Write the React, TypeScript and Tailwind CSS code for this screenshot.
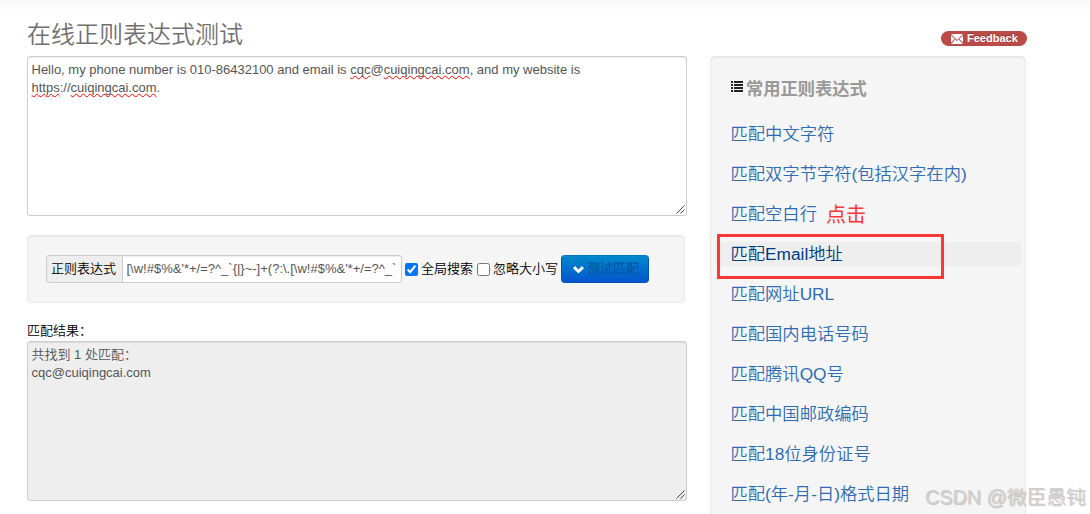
import React, { useState } from 'react';
import clsx from 'clsx';

const patterns = [
  '匹配中文字符',
  '匹配双字节字符(包括汉字在内)',
  '匹配空白行',
  '匹配Email地址',
  '匹配网址URL',
  '匹配国内电话号码',
  '匹配腾讯QQ号',
  '匹配中国邮政编码',
  '匹配18位身份证号',
  '匹配(年-月-日)格式日期',
];

function Misspelled({ children }: { children: React.ReactNode }) {
  return (
    <span className="underline decoration-[#f00] decoration-wavy decoration-[1.3px] underline-offset-1 [text-decoration-skip-ink:none]">
      {children}
    </span>
  );
}

function ResizeGrip() {
  return (
    <svg
      className="absolute right-px bottom-px h-[9px] w-[9px]"
      viewBox="0 0 9 9"
      fill="none"
      stroke="#444"
      strokeWidth="1"
    >
      <path d="M0.5 8.5l8-8M4.5 8.5l4-4" />
    </svg>
  );
}

interface TextPanelProps {
  children: React.ReactNode;
  className?: string;
}

function TextPanel({ children, className }: TextPanelProps) {
  return (
    <div
      className={clsx(
        'relative h-40 w-[660px] rounded-[3px] border border-[#ccc] py-1 pl-[3.5px] text-[#555] shadow-[inset_0_1px_1px_rgba(0,0,0,0.075)]',
        className
      )}
    >
      {children}
      <ResizeGrip />
    </div>
  );
}

interface CheckOptionProps {
  label: string;
  checked: boolean;
  onChange: () => void;
}

function CheckOption({ label, checked, onChange }: CheckOptionProps) {
  return (
    <label className="flex h-7 items-center whitespace-nowrap">
      <input
        type="checkbox"
        checked={checked}
        onChange={onChange}
        className="mt-px mr-[3px] h-[13px] w-[13px]"
      />
      {label}
    </label>
  );
}

export default function App() {
  const [global, setGlobal] = useState(true);
  const [ignoreCase, setIgnoreCase] = useState(false);
  const [selected, setSelected] = useState(3);

  return (
    <div className="relative h-[514px] w-[1090px] overflow-hidden bg-white font-['Liberation_Sans','Noto_Sans_CJK_SC',sans-serif] text-[13px] leading-[18px] font-[350] text-black">
      <div className="h-3 bg-linear-to-b from-[#f9f9f9] to-white" />

      <div className="flex pl-[27px]">
        <main className="w-[683px] shrink-0">
          <h1 className="h-11 text-[24px] leading-[45px] font-[350] text-[#707070]">在线正则表达式测试</h1>

          <TextPanel className="bg-white">
            Hello, my phone number is 010-86432100 and email is <Misspelled>cqc</Misspelled>@
            <Misspelled>cuiqingcai.com</Misspelled>, and my website is
            <br />
            <Misspelled>https</Misspelled>://<Misspelled>cuiqingcai.com</Misspelled>.
          </TextPanel>

          {/* Expression */}
          <div className="mt-[19px] flex h-[68px] w-[658px] items-start rounded-[4px] border border-[#e8e8e8] bg-[#f5f5f5] pt-[19px] pl-[18px] shadow-[inset_0_1px_1px_rgba(0,0,0,0.05)]">
            <span className="h-7 w-[77px] shrink-0 rounded-l-[3px] border border-[#ccc] bg-[#eee] pl-1 leading-[26px] whitespace-nowrap">
              正则表达式
            </span>
            <div className="-ml-px h-7 w-[280px] shrink-0 rounded-r-[3px] border border-[#ccc] bg-white pr-1 pl-[3.5px] leading-[26px] text-[#555] shadow-[inset_0_1px_1px_rgba(0,0,0,0.075)]">
              <div className="overflow-hidden whitespace-nowrap">
                {"[\\w!#$%&'*+/=?^_`{|}~-]+(?:\\.[\\w!#$%&'*+/=?^_`"}
              </div>
            </div>
            <div className="ml-[3px] flex gap-1">
              <CheckOption label="全局搜索" checked={global} onChange={() => setGlobal(!global)} />
              <CheckOption
                label="忽略大小写"
                checked={ignoreCase}
                onChange={() => setIgnoreCase(!ignoreCase)}
              />
            </div>
            <button
              type="button"
              className="ml-[3px] flex h-7 w-[88px] shrink-0 items-center rounded-[4px] border border-[#0055b4] border-t-[#0077c0] bg-linear-to-b from-[#0088cc] to-[#0055cc] pl-[11px] whitespace-nowrap text-[#0756a2] [text-shadow:0_-1px_0_rgba(0,0,0,0.15)]"
            >
              <svg className="mr-[3px] h-[11px] w-[11px]" viewBox="0 0 11 11" fill="none">
                <path d="M1 3.2l4.5 4.3L10 3.2" stroke="#fff" strokeWidth="3" />
              </svg>
              测试匹配
            </button>
          </div>

          {/* Result */}
          <p className="mt-[19px] h-[19px]">匹配结果：</p>
          <TextPanel className="bg-[#eee]">
            共找到 1 处匹配：
            <br />
            cqc@cuiqingcai.com
          </TextPanel>
        </main>

        <aside className="w-[317px] shrink-0 pt-[19px]">
          <div className="flex justify-end">
            <a className="flex h-[15px] w-[86px] items-center rounded-full bg-[#b94a48] pl-[10px] text-[11px] leading-[15px] font-bold text-white [text-shadow:0_-1px_0_rgba(0,0,0,0.25)]">
              <svg className="mt-px mr-1 h-[10px] w-3" viewBox="0 0 12 10">
                <path
                  fill="#fff"
                  d="M0 0h12L6 6zM0 1.3L3.8 5 0 8.5zM12 1.3L8.2 5 12 8.5zM0 10l4.4-4.4L6 7.1l1.6-1.5L12 10z"
                />
              </svg>
              Feedback
            </a>
          </div>

          <div className="mt-2.5 h-[480px] w-[316px] rounded-[4px] border border-[#e8e8e8] bg-[#f5f5f5] pt-[19px] pl-1 shadow-[inset_0_1px_1px_rgba(0,0,0,0.05)]">
            <h2 className="flex h-6 items-center pl-4 text-[17.25px] leading-[26px] font-bold text-[#999]">
              <svg className="mr-[3px] mb-[3px] h-[11px] w-3" viewBox="0 0 12 11" fill="#222">
                <path d="M0 0h2v2H0zM3 0h9v2H3zM0 3h2v2H0zM3 3h9v2H3zM0 6h2v2H0zM3 6h9v2H3zM0 9h2v2H0zM3 9h9v2H3z" />
              </svg>
              <span className="pt-0.5">常用正则表达式</span>
            </h2>
            <ul className="mt-[22px] flex w-[306px] flex-col gap-4">
              {patterns.map((label, i) => (
                <li
                  key={label}
                  onClick={() => setSelected(i)}
                  className={clsx(
                    'h-6 cursor-pointer pl-[15.5px] text-[17.3px] leading-6 whitespace-nowrap',
                    i === selected ? 'bg-[#eee] text-[#003d80]' : 'text-[#2f6bb3]'
                  )}
                >
                  {label}
                </li>
              ))}
            </ul>
          </div>
        </aside>
      </div>

      {/* Annotations */}
      <span className="absolute top-[201px] left-[826px] text-[20px] leading-7 font-normal text-[#fb3838]">点击</span>
      <div className="absolute top-[234px] left-[717px] h-[45px] w-[227px] border-3 border-[#fb3838]" />

      <span className="absolute top-[483px] left-[925px] text-[19.8px] leading-7 whitespace-nowrap text-[#cfcfcf] [text-shadow:1px_1px_1px_rgba(120,120,120,0.4)]">
        CSDN @微臣愚钝
      </span>
    </div>
  );
}
